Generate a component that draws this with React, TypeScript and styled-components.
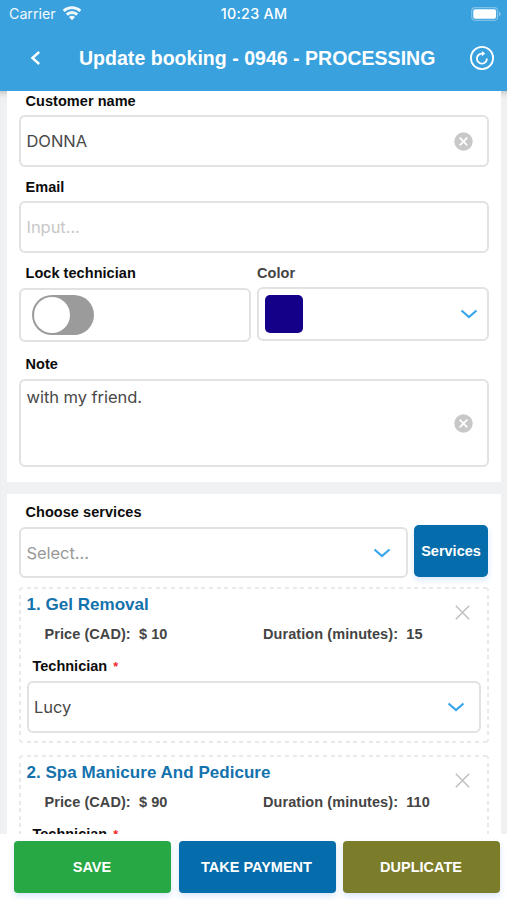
import React from "react";
import styled, { createGlobalStyle } from "styled-components";

const GlobalStyle = createGlobalStyle`
  * { box-sizing: border-box; }
  body { margin: 0; background: #fff; }
`;

const arial = `"Liberation Sans", Arial, sans-serif`;
const system = `Inter, "Liberation Sans", sans-serif`;

const Screen = styled.div`
  display: flex;
  flex-direction: column;
  width: 507px;
  height: 900px;
  overflow: hidden;
  background: #fff;
  font-family: ${arial};
`;

const Header = styled.header`
  flex: none;
  height: 91px;
  background: #39a1de;
  color: #fff;
`;

const StatusBar = styled.div`
  display: grid;
  grid-template-columns: 1fr auto 1fr;
  align-items: center;
  height: 27px;
  padding: 0 6px 0 9px;
  font: 400 14.3px/27px ${system};
`;

const Carrier = styled.div`
  display: flex;
  align-items: center;
  gap: 6px;
  letter-spacing: -0.05px;
  opacity: 0.93;
`;

const Clock = styled.div`
  padding-right: 2px;
  font-weight: 500;
  font-size: 14.3px;
  letter-spacing: 0.3px;
`;

const BatterySlot = styled.div`
  display: flex;
  justify-content: flex-end;
`;

const NavBar = styled.div`
  display: grid;
  grid-template-columns: 71px 1fr 50px;
  align-items: center;
  height: 62px;
`;

const NavButton = styled.button`
  display: flex;
  align-items: center;
  justify-content: center;
  height: 40px;
  padding: 0;
  border: 0;
  background: none;
  color: #fff;
`;

const Title = styled.h1`
  margin: 0;
  padding-left: 8px;
  font: 700 19.5px/26px ${arial};
  letter-spacing: 0.03px;
  white-space: nowrap;
`;

const Content = styled.main`
  flex: none;
  height: 743px;
  padding: 0 6px 0 7px;
  overflow: hidden;
  background: #f0f1f2;
  box-shadow: inset 0 7px 6px -5px rgba(0, 0, 0, 0.2);
`;

const Card = styled.section<{ $top?: boolean }>`
  height: ${(p) => (p.$top ? "391px" : "auto")};
  margin-bottom: 12px;
  padding: ${(p) => (p.$top ? "0" : "8px")} 12px 0;
  background: #fff;
`;

const Label = styled.div<{ $soft?: boolean; $flush?: boolean; $gap?: number }>`
  height: 20px;
  margin-bottom: ${(p) => p.$gap ?? 4}px;
  padding-left: ${(p) => (p.$flush ? "0" : "6.5px")};
  color: ${(p) => (p.$soft ? "#444" : "#0c0c0c")};
  font: 700 14.5px/20px ${arial};
  letter-spacing: 0.05px;
  white-space: nowrap;
`;

const Field = styled.div<{ $gap?: number }>`
  min-width: 0;
  margin-bottom: ${(p) => p.$gap ?? 10}px;
`;

const Box = styled.div<{ $height?: number; $end?: number; $muted?: string }>`
  display: flex;
  flex: 1;
  align-items: center;
  justify-content: space-between;
  height: ${(p) => p.$height ?? 52}px;
  padding: 0 ${(p) => p.$end ?? 14.5}px 0 5.5px;
  border: 2px solid #e2e2e2;
  border-radius: 6px;
  background: #fff;
  color: ${(p) => p.$muted ?? "#484848"};
  font: 400 16.5px/24px ${system};
  letter-spacing: -0.05px;
`;

const NoteText = styled.span`
  align-self: flex-start;
  padding-top: 4px;
`;

const Pair = styled.div`
  display: grid;
  grid-template-columns: 232px 232px;
  gap: 6px;
`;

const Toggle = styled.div`
  width: 62px;
  height: 40px;
  margin-left: 5.5px;
  padding: 2px;
  border-radius: 20px;
  background: #9b9b9b;
`;

const Knob = styled.div`
  width: 36px;
  height: 36px;
  border-radius: 50%;
  background: #fff;
`;

const Swatch = styled.div`
  width: 38px;
  height: 38px;
  margin-left: 0.5px;
  border-radius: 5px;
  background: #140088;
`;

const SelectRow = styled.div`
  display: flex;
  align-items: flex-start;
  gap: 6.5px;
  height: 60px;
  margin-top: 5px;
  padding-right: 1px;
`;

const ServicesButton = styled.button`
  width: 74px;
  height: 52px;
  margin-top: -2px;
  padding: 0;
  border: 0;
  border-radius: 5px;
  background: #056dab;
  color: #fff;
  font: 700 14.5px/20px ${arial};
  box-shadow: 0 3px 6px rgba(60, 140, 255, 0.2);
`;

const dash = "#e9e9e9 0 4px, transparent 4px 7.6px";

const ServiceCard = styled.article`
  height: 156px;
  margin-bottom: 12px;
  padding: 8px 8px 0 7.5px;
  border-radius: 4px;
  background:
    repeating-linear-gradient(90deg, ${dash}) 0 0 / 100% 2px no-repeat,
    repeating-linear-gradient(90deg, ${dash}) 0 100% / 100% 2px no-repeat,
    repeating-linear-gradient(180deg, ${dash}) 0 0 / 2px 100% no-repeat,
    repeating-linear-gradient(180deg, ${dash}) 100% 0 / 2px 100% no-repeat;
`;

const ServiceTop = styled.div`
  display: grid;
  grid-template-columns: 1fr 36px;
  height: 61px;
`;

const ServiceName = styled.h2`
  margin: 0;
  color: #1472ad;
  font: 700 17px/20px ${arial};
  letter-spacing: 0.03px;
`;

const Facts = styled.div`
  display: grid;
  grid-template-columns: 218.5px 1fr;
  padding: 10px 0 0 18px;
  color: #444;
  font: 700 14.5px/18px ${arial};
  letter-spacing: 0.07px;
  white-space: pre;
`;

const RemoveButton = styled.button`
  display: flex;
  justify-content: center;
  padding: 10px 2px 0 0;
  border: 0;
  background: none;
  color: #bdbdbd;
`;

const TechLabel = styled(Label)`
  padding-left: 6px;
  letter-spacing: 0;
`;

const Required = styled.span`
  margin-left: 6px;
  color: #f3262b;
  font-size: 12.5px;
`;

const Footer = styled.footer`
  display: grid;
  grid-template-columns: repeat(3, 157px);
  gap: 7.5px;
  flex: 1;
  padding: 7px 7px 7px 14px;
  background: #fff;
`;

const Action = styled.button<{ $color: string }>`
  height: 52px;
  padding: 0 1px 0 0;
  border: 0;
  border-radius: 4px;
  background: ${(p) => p.$color};
  color: #fff;
  font: 700 14.5px/20px ${arial};
  box-shadow: 0 3px 6px rgba(70, 140, 230, 0.22);
`;

const Wifi = () => (
  <svg width="20" height="16" viewBox="0 0 20 16" fill="none" stroke="currentColor" strokeWidth="2.9">
    <path d="M1.6 5C6.3 0.5 13.7 0.5 18.4 5" />
    <path d="M4.8 8.6C7.7 5.8 12.3 5.8 15.2 8.6" />
    <path d="M10 14.2L6.9 11.1C8.6 9.4 11.4 9.4 13.1 11.1Z" fill="currentColor" stroke="none" />
  </svg>
);

const Battery = () => (
  <svg width="30" height="14" viewBox="0 0 30 14">
    <rect x="0.7" y="0.7" width="26" height="12.6" rx="3.5" fill="none" stroke="#fff" strokeOpacity="0.35" strokeWidth="1.2" />
    <rect x="2.3" y="2.3" width="22.8" height="9.4" rx="2" fill="#fff" />
    <path d="M28 4.8C30 5.4 30 8.6 28 9.2Z" fill="#fff" fillOpacity="0.45" />
  </svg>
);

const Back = () => (
  <svg width="12" height="16" viewBox="0 0 12 16" fill="none" stroke="currentColor" strokeWidth="2.4">
    <path d="M9.2 2L2.4 8L9.2 14" />
  </svg>
);

const Refresh = () => (
  <svg width="26" height="26" viewBox="0 0 26 26" fill="none" stroke="currentColor">
    <circle cx="13" cy="13" r="11.1" strokeWidth="1.8" />
    <path d="M17.9 13.5A5 5 0 1 1 13 8.6H14" strokeWidth="1.8" />
    <path d="M12.9 5.9L16.2 8.6L12.9 11.3Z" fill="currentColor" stroke="none" />
  </svg>
);

const Clear = () => (
  <svg width="19" height="19" viewBox="0 0 19 19">
    <circle cx="9.5" cy="9.5" r="9.2" fill="#c8c8c8" />
    <path d="M5.7 5.7L13.3 13.3M13.3 5.7L5.7 13.3" stroke="#fff" strokeWidth="1.8" />
  </svg>
);

const Chevron = () => (
  <svg width="18" height="10" viewBox="0 0 18 10" fill="none" stroke="#38a5ed" strokeWidth="2.2">
    <path d="M1.5 1.5L9 8L16.5 1.5" />
  </svg>
);

const Cross = () => (
  <svg width="15" height="15" viewBox="0 0 15 15" fill="none" stroke="currentColor" strokeWidth="1.4">
    <path d="M0.8 0.8L14.2 14.2M14.2 0.8L0.8 14.2" />
  </svg>
);

const services = [
  { name: "1. Gel Removal", price: "10", minutes: "15", technician: "Lucy" },
  { name: "2. Spa Manicure And Pedicure", price: "90", minutes: "110", technician: "Lucy" },
];

export default function App() {
  return (
    <Screen>
      <GlobalStyle />
      <Header>
        <StatusBar>
          <Carrier>Carrier<Wifi /></Carrier>
          <Clock>10:23 AM</Clock>
          <BatterySlot><Battery /></BatterySlot>
        </StatusBar>
        <NavBar>
          <NavButton aria-label="Back"><Back /></NavButton>
          <Title>Update booking - 0946 - PROCESSING</Title>
          <NavButton aria-label="Refresh"><Refresh /></NavButton>
        </NavBar>
      </Header>
      <Content>
        <Card $top>
          <Field>
            <Label>Customer name</Label>
            <Box>DONNA<Clear /></Box>
          </Field>
          <Field>
            <Label>Email</Label>
            <Box $muted="#c8c8c8">Input...</Box>
          </Field>
          <Pair>
            <Field $gap={12}>
              <Label $gap={5}>Lock technician</Label>
              <Box $height={54}><Toggle><Knob /></Toggle></Box>
            </Field>
            <Field $gap={13}>
              <Label $soft $flush>Color</Label>
              <Box $height={54} $end={9}><Swatch /><Chevron /></Box>
            </Field>
          </Pair>
          <Field>
            <Label $gap={5}>Note</Label>
            <Box $height={88}><NoteText>with my friend.</NoteText><Clear /></Box>
          </Field>
        </Card>
        <Card>
          <Label>Choose services</Label>
          <SelectRow>
            <Box $height={51} $muted="#999">Select...<Chevron /></Box>
            <ServicesButton>Services</ServicesButton>
          </SelectRow>
          {services.map((s) => (
            <ServiceCard key={s.name}>
              <ServiceTop>
                <div>
                  <ServiceName>{s.name}</ServiceName>
                  <Facts>
                    <span>{`Price (CAD):  $ ${s.price}`}</span>
                    <span>{`Duration (minutes):  ${s.minutes}`}</span>
                  </Facts>
                </div>
                <RemoveButton aria-label="Remove service"><Cross /></RemoveButton>
              </ServiceTop>
              <TechLabel $gap={5}>Technician<Required>*</Required></TechLabel>
              <Box>{s.technician}<Chevron /></Box>
            </ServiceCard>
          ))}
        </Card>
      </Content>
      <Footer>
        <Action $color="#28a745">SAVE</Action>
        <Action $color="#056dab">TAKE PAYMENT</Action>
        <Action $color="#7b7d2a">DUPLICATE</Action>
      </Footer>
    </Screen>
  );
}
